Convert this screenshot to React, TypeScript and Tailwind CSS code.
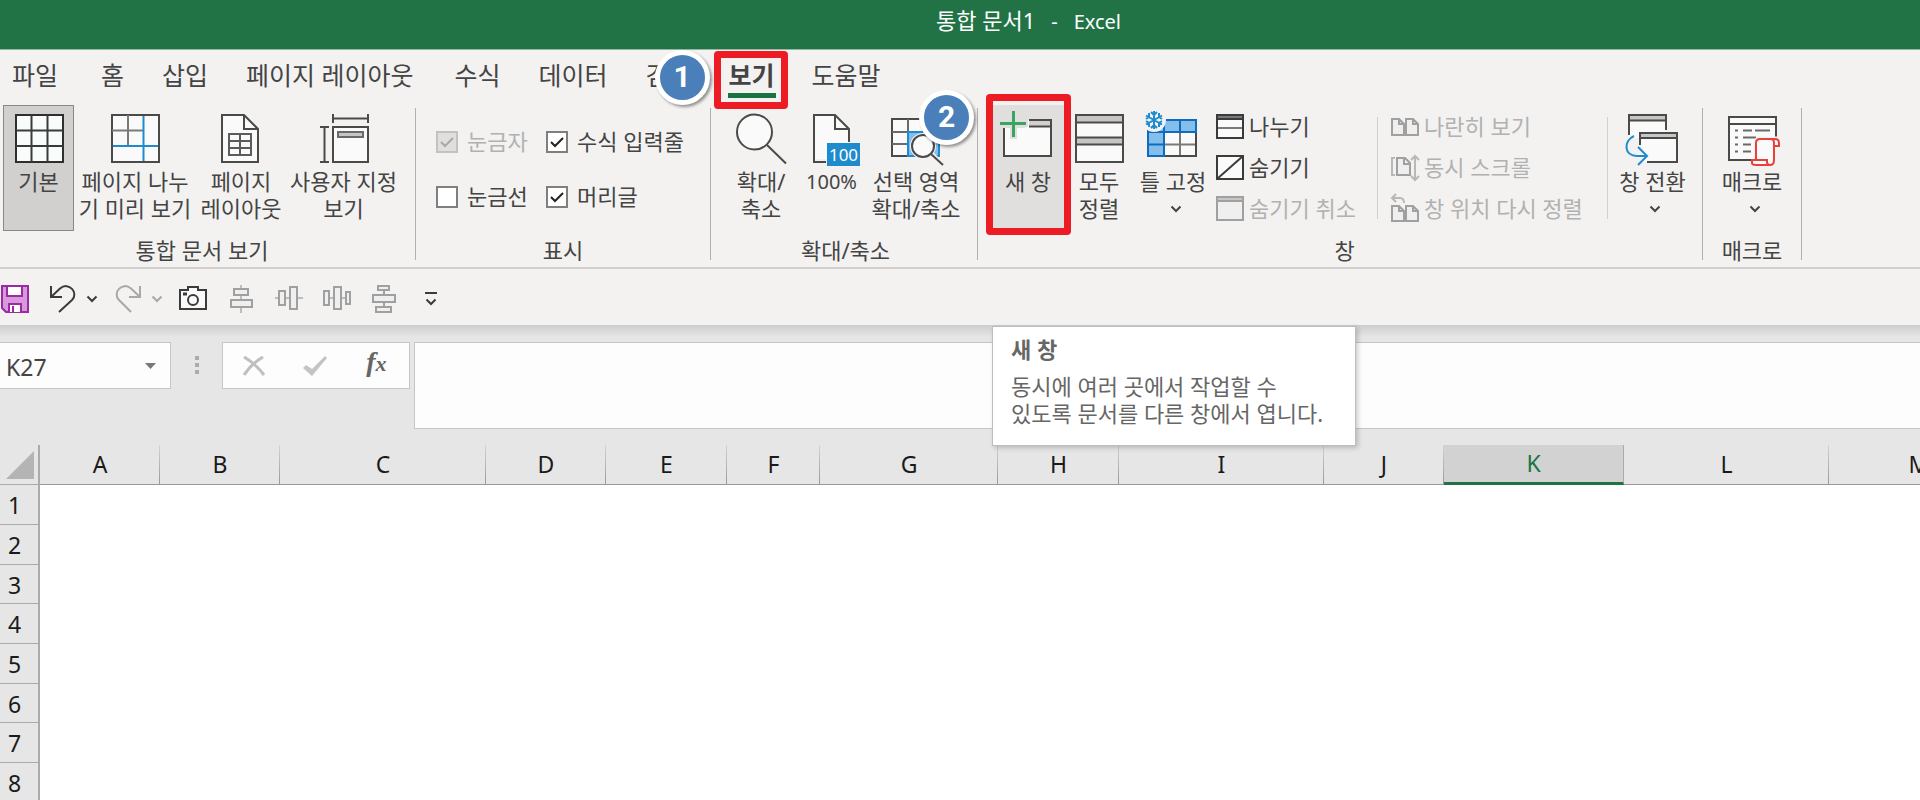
import React from 'react';
import clsx from 'clsx';

const TABS = [
  { name: '파일', className: 'mr-[5px]' },
  { name: '홈' },
  { name: '삽입' },
  { name: '페이지 레이아웃', className: 'pr-[3px]' },
  { name: '수식' },
  { name: '데이터' },
  { name: '검토', badge: '1' },
  { name: '보기', active: true, className: '-mx-[2px]' },
  { name: '도움말' },
];

const COLUMNS = [
  { name: 'A', width: 'w-[120px]' },
  { name: 'B', width: 'w-[120px]' },
  { name: 'C', width: 'w-[206px]' },
  { name: 'D', width: 'w-[120px]' },
  { name: 'E', width: 'w-[121px]' },
  { name: 'F', width: 'w-[93px]' },
  { name: 'G', width: 'w-[178px]' },
  { name: 'H', width: 'w-[121px]' },
  { name: 'I', width: 'w-[205px]' },
  { name: 'J', width: 'w-[120px]' },
  { name: 'K', width: 'w-[180px]', selected: true },
  { name: 'L', width: 'w-[205px]' },
  { name: 'M', width: 'w-[180px]' },
];

const ROWS = [1, 2, 3, 4, 5, 6, 7, 8];

/* ---------- large ribbon icons ---------- */

function BigIcon({ children }: { children: React.ReactNode }) {
  return (
    <svg width="56" height="59" viewBox="0 0 56 59" fill="none" stroke="#4a4a48" strokeWidth="2" className="overflow-visible shrink-0" aria-hidden="true">
      {children}
    </svg>
  );
}

function NormalViewIcon() {
  return (
    <BigIcon>
      <rect x="5" y="6" width="47" height="47" fill="#f8fcfb" stroke="#2f2f2f" />
      <path d="M20.5 6v47M36.5 6v47M5 21.5h47M5 37h47" stroke="#3b3b3b" />
    </BigIcon>
  );
}

function PageBreakIcon() {
  return (
    <BigIcon>
      <rect x="5" y="6" width="47" height="47" fill="#fafafa" />
      <path d="M21 6v31M5 21.5h31" stroke="#7a7a78" />
      <path d="M36.5 7v45M6 37h45" stroke="#1e8bcd" />
    </BigIcon>
  );
}

function PageLayoutIcon() {
  return (
    <BigIcon>
      <path d="M9 6h22l14 14v33H9z" fill="#fafafa" />
      <path d="M31 6v14h14" />
      <path d="M16 25h22v21H16zM27 25v21M16 32h22M16 39h22" stroke="#5c5c5a" />
    </BigIcon>
  );
}

function CustomViewIcon() {
  return (
    <BigIcon>
      <rect x="17" y="18" width="35" height="35" fill="#fafafa" />
      <rect x="22" y="23" width="25" height="5" fill="#c8c6c4" stroke="#6a6a68" />
      <path d="M17 9.5h35M17 5v9M52 5v9M8.5 18v35M4 18h9M4 53h9" />
    </BigIcon>
  );
}

function ZoomIcon() {
  return (
    <BigIcon>
      <circle cx="21.5" cy="23" r="17.5" fill="#fafafa" />
      <path d="M34 36l19 18.5" />
    </BigIcon>
  );
}

function Zoom100Icon() {
  return (
    <BigIcon>
      <path d="M10 6h21l14 14v30H10z" fill="#fafafa" stroke="none" />
      <path d="M22 53H10V6h21l14 14v13M31 6v14h14" />
      <rect x="23" y="34" width="33" height="23" fill="#1e8bcd" stroke="none" />
      <text x="39.5" y="52" textAnchor="middle" fontSize="17" fill="#fff" stroke="none">100</text>
    </BigIcon>
  );
}

function ZoomSelectionIcon() {
  return (
    <BigIcon>
      <path d="M4 10h47v37H4z" fill="#fafafa" />
      <path d="M20 10v37M35.5 10v37M4 23h47M4 35h47" stroke="#6a6a68" />
      <path d="M20 23h31v24H20z" fill="#83beec" stroke="#1e8bcd" />
      <circle cx="35" cy="37" r="13" fill="#f3f2f1" stroke="none" />
      <path d="M42 44l14 14" stroke="#f3f2f1" strokeWidth="6" />
      <circle cx="35" cy="37" r="11" fill="#fafafa" />
      <path d="M43 45l12 11" />
    </BigIcon>
  );
}

function NewWindowIcon() {
  return (
    <BigIcon>
      <path d="M4 19h21v-8h26v36H4z" fill="#fafafa" stroke="none" />
      <path d="M29 11h22v6H29z" fill="#d2d0ce" stroke="none" />
      <path d="M4 19v28h47V11H29M29 17.5h22" />
      <path d="M13.5 2v28M0 14.5h28" stroke="#e1dfdd" strokeWidth="7" />
      <path d="M13.5 2v26M0 14.5h26" stroke="#37a660" strokeWidth="3" />
    </BigIcon>
  );
}

function ArrangeAllIcon() {
  return (
    <BigIcon>
      <rect x="5" y="6" width="47" height="47" fill="#fafafa" />
      <path d="M6 7h45v6H6zM6 29h45v6H6z" fill="#c8c6c4" stroke="none" />
      <path d="M5 13.5h47M5 28.5h47M5 35.5h47" />
    </BigIcon>
  );
}

function FreezeIcon() {
  return (
    <BigIcon>
      <path d="M3 11h48v36H3z" fill="#fafafa" />
      <path d="M19 35.5h32M35 23v24" stroke="#7a7a78" />
      <path d="M51 23v24H19" />
      <path d="M3 11h48v12H19v24H3z" fill="#83beec" stroke="#0f6cbd" />
      <path d="M19 11v12M35 11v12M3 23h16M3 35.5h16" stroke="#0f6cbd" />
      <circle cx="9" cy="11" r="12" fill="#f3f2f1" stroke="none" />
      <path
        d="M9 2v18M1 6.5l16 9M1 15.5l16-9M6 3l3 3 3-3M6 19l3-3 3 3M1 10l3-2V4M17 10l-3-2V4M1 12l3 2v4M17 12l-3 2v4"
        stroke="#1e8bcd"
      />
    </BigIcon>
  );
}

function SwitchWindowIcon() {
  return (
    <BigIcon>
      <path d="M4 6h37v17H15v6H4z" fill="#fafafa" stroke="none" />
      <path d="M4 6h37v5H4z" fill="#c8c6c4" stroke="none" />
      <path d="M4 26V6h37v15M4 11.5h37" />
      <path d="M15 24h37v29H18V38h-3z" fill="#fafafa" stroke="none" />
      <path d="M15 24h37v5H15z" fill="#c8c6c4" stroke="none" />
      <path d="M15 36V24h37v29H22M15 29h37" />
      <path d="M9 27C-2 32-1 47 12 47h10M13 38l9 9-9 9" stroke="#1e8bcd" />
    </BigIcon>
  );
}

function MacroIcon() {
  return (
    <BigIcon>
      <path d="M5 8h47v43H5z" fill="#fafafa" stroke="none" />
      <path d="M52 28V8H5v43h22M5 15h47" />
      <path d="M11 21.5h3M19 21.5h9M31 21.5h15M11 28.5h3M19 28.5h13M11 35.5h3M19 35.5h8M11 42.5h3M19 42.5h8" stroke="#6a6a68" />
      <path d="M32 51V35q0-5 5-5h14v16l-3 10H30z" fill="#fafafa" stroke="#f3f2f1" strokeWidth="5" />
      <path d="M32 51V34q0-4 4-4h15q4 0 4 4v3h-5V34q0-4-3-4M50 37v14q0 5-4 5H32q-4 0-4-2v-3h15v2q0 3 3 3" fill="#fafafa" stroke="#e8413c" />
    </BigIcon>
  );
}

/* ---------- small ribbon icons ---------- */

function SmallIcon({ children, disabled }: { children: React.ReactNode; disabled?: boolean }) {
  return (
    <svg width="28" height="28" viewBox="0 0 28 28" fill="none" stroke={disabled ? '#a0a0a0' : '#3b3b3b'} strokeWidth="2" className="overflow-visible shrink-0" aria-hidden="true">
      {children}
    </svg>
  );
}

function SplitIcon() {
  return (
    <SmallIcon>
      <path d="M1 2h26v23H1z" fill="#fafafa" />
      <path d="M1 4h26" stroke="#7a7a78" strokeWidth="3" />
      <path d="M1 2h26v23H1zM1 6h26" />
      <path d="M2 15h24" stroke="#7a7a78" />
    </SmallIcon>
  );
}

function HideIcon() {
  return (
    <SmallIcon>
      <path d="M1 2h26v23H1z" fill="#fafafa" />
      <path d="M1 25L27 2" />
    </SmallIcon>
  );
}

function UnhideIcon() {
  return (
    <SmallIcon disabled>
      <path d="M1 2h26v23H1z" fill="#efefef" />
      <path d="M1 2h26v4H1z" fill="#c8c6c4" />
    </SmallIcon>
  );
}

function SideBySideIcon() {
  return (
    <SmallIcon disabled>
      <path d="M1 6h7l5 5v11H1zM8 6v5h5M15 6h7l5 5v11H15zM22 6v5h5" fill="#efefef" />
    </SmallIcon>
  );
}

function SyncScrollIcon() {
  return (
    <SmallIcon disabled>
      <path d="M6 4h8l5 5v12H6zM13 4v6h6" fill="#efefef" />
      <path d="M4 4H1v17h3M24 2v24M20 6l4-4 4 4M20 22l4 4 4-4" stroke="#b8b8b8" />
    </SmallIcon>
  );
}

function ResetWindowIcon() {
  return (
    <SmallIcon disabled>
      <path d="M1 11h7l5 5v10H1zM8 11v5h5M15 11h7l5 5v10H15zM22 11v5h5" fill="#efefef" />
      <path d="M5-1L1 3l4 4M1 3h8q4 0 4 5" stroke="#b8b8b8" />
    </SmallIcon>
  );
}

function Chevron({ className }: { className?: string }) {
  return (
    <svg width="12" height="8" viewBox="0 0 12 8" fill="none" stroke="currentColor" strokeWidth="2" className={className} aria-hidden="true">
      <path d="M1.5 1.5L6 6l4.5-4.5" />
    </svg>
  );
}

/* ---------- ribbon parts ---------- */

function Badge({ value, className }: { value: string; className: string }) {
  return (
    <span
      className={clsx(
        "absolute z-10 flex size-[55px] items-center justify-center rounded-full border-5 border-white bg-[#4a7fba] pb-px font-['Roboto',sans-serif] text-[30px] leading-none font-bold text-white shadow-[2px_2px_3px_rgba(0,0,0,0.4)]",
        className
      )}
    >
      {value}
    </span>
  );
}

function Divider() {
  return <div className="mt-[3px] h-[152px] w-px shrink-0 bg-[#b3b1af]" />;
}

function Group({ label, className, children }: { label: string; className?: string; children: React.ReactNode }) {
  return (
    <section aria-label={label} className={clsx('flex shrink-0 flex-col', className)}>
      <div className="flex h-[126px]">{children}</div>
      <div className="mt-[6px] text-center leading-[27px]">{label}</div>
    </section>
  );
}

interface BigButtonProps {
  icon: React.ReactNode;
  lines: string[];
  className: string;
  menu?: boolean;
  children?: React.ReactNode;
}

function BigButton({ icon, lines, className, menu, children }: BigButtonProps) {
  return (
    <button type="button" className={clsx('relative flex shrink-0 flex-col items-center whitespace-nowrap', className)}>
      {icon}
      {lines.map((line) => (
        <span key={line} className={clsx('leading-[27px]', line === '100%' && 'text-[20px]')}>{line}</span>
      ))}
      {menu && <Chevron className="mt-[10px] ml-[5px]" />}
      {children}
    </button>
  );
}

function SmallButton({ icon, label, disabled }: { icon: React.ReactNode; label: string; disabled?: boolean }) {
  return (
    <button type="button" disabled={disabled} className="flex h-[41px] items-center gap-[5px] whitespace-nowrap disabled:text-[#b1b1b1]">
      {icon}
      {label}
    </button>
  );
}

function CheckOption({ label, checked, disabled }: { label: string; checked?: boolean; disabled?: boolean }) {
  return (
    <label className={clsx('flex h-[55px] items-center gap-[9px] whitespace-nowrap', disabled && 'text-[#b1b1b1]')}>
      <span className="grid">
        <input
          type="checkbox"
          defaultChecked={checked}
          disabled={disabled}
          className="peer col-start-1 row-start-1 size-[22px] appearance-none border-2 border-[#7f7f7f] bg-white disabled:border-[#c4c2c0] disabled:bg-[#e1dfdd]"
        />
        <svg viewBox="0 0 22 22" fill="none" stroke={disabled ? '#a8a8a8' : '#222'} strokeWidth="2" className="pointer-events-none invisible col-start-1 row-start-1 size-[22px] peer-checked:visible" aria-hidden="true">
          <path d="M5 11l4 4 8-8" />
        </svg>
      </span>
      {label}
    </label>
  );
}

function RibbonTabs() {
  return (
    <nav className="flex h-[55px] items-start gap-[38px] pt-[9px] pl-3 text-[25px]">
      {TABS.map((tab) => (
        <button
          key={tab.name}
          type="button"
          className={clsx('relative flex shrink-0 flex-col items-center whitespace-nowrap leading-8', tab.active && 'font-bold', tab.className)}
        >
          {tab.name}
          {tab.badge && <Badge value={tab.badge} className="-top-[9px] left-[9px]" />}
          {tab.active && (
            <>
              <span className="mt-[2px] h-[5px] w-12 bg-[#1b7241]" />
              <span className="absolute -top-2 -left-[14px] z-10 h-[58px] w-[74px] rounded-[4px] border-7 border-[#ed1c24]" />
            </>
          )}
        </button>
      ))}
    </nav>
  );
}

function Tooltip() {
  return (
    <div role="tooltip" className="absolute top-[221px] left-0 z-20 w-[364px] border border-[#bebebe] bg-white pt-[9px] pr-4 pb-[18px] pl-[18px] leading-[27px] whitespace-nowrap text-[#666] shadow-[2px_2px_5px_rgba(0,0,0,0.2)]">
      <strong className="block font-bold">새 창</strong>
      <p className="mt-[10px]">
        동시에 여러 곳에서 작업할 수
        <br />
        있도록 문서를 다른 창에서 엽니다.
      </p>
    </div>
  );
}

function Ribbon() {
  return (
    <div className="flex h-[162px] items-start">
      <Group label="통합 문서 보기" className="pr-[14px] pl-[3px]">
        <BigButton icon={<NormalViewIcon />} lines={['기본']} className="w-[71px] border border-[#8a8886] bg-[#d2d0ce] pt-[3px]" />
        <BigButton icon={<PageBreakIcon />} lines={['페이지 나누', '기 미리 보기']} className="w-[122px] pt-1" />
        <BigButton icon={<PageLayoutIcon />} lines={['페이지', '레이아웃']} className="w-[90px] pt-1" />
        <BigButton icon={<CustomViewIcon />} lines={['사용자 지정', '보기']} className="w-[115px] pt-1" />
      </Group>
      <Divider />
      <Group label="표시" className="w-[294px]">
        <div className="grid grid-cols-[110px_auto] content-start pt-[9px] pl-5">
          <CheckOption label="눈금자" checked disabled />
          <CheckOption label="수식 입력줄" checked />
          <CheckOption label="눈금선" />
          <CheckOption label="머리글" checked />
        </div>
      </Group>
      <Divider />
      <Group label="확대/축소" className="pr-[13px] pl-4">
        <BigButton icon={<ZoomIcon />} lines={['확대/', '축소']} className="w-[68px] pt-1" />
        <BigButton icon={<Zoom100Icon />} lines={['100%']} className="w-[73px] pt-1" />
        <BigButton icon={<ZoomSelectionIcon />} lines={['선택 영역', '확대/축소']} className="w-[96px] pt-1">
          <Badge value="2" className="-top-[15px] left-[51px]" />
        </BigButton>
      </Group>
      <Divider />
      <Group label="창" className="pr-[5px] pl-[14px]">
        <div className="relative flex">
          <BigButton icon={<NewWindowIcon />} lines={['새 창']} className="w-[72px] bg-[#e1dfdd] pt-1">
            <span className="absolute -top-[11px] -left-[6px] h-[141px] w-[85px] rounded-[4px] border-7 border-[#ed1c24]" />
          </BigButton>
          <Tooltip />
        </div>
        <BigButton icon={<ArrangeAllIcon />} lines={['모두', '정렬']} className="w-[70px] pt-1" />
        <BigButton icon={<FreezeIcon />} lines={['틀 고정']} menu className="w-[78px] pt-1" />
        <div className="w-[165px] pt-px pl-1">
          <SmallButton icon={<SplitIcon />} label="나누기" />
          <SmallButton icon={<HideIcon />} label="숨기기" />
          <SmallButton icon={<UnhideIcon />} label="숨기기 취소" disabled />
        </div>
        <div className="my-3 w-px bg-[#d2d0ce]" />
        <div className="w-[229px] pt-px pl-[13px]">
          <SmallButton icon={<SideBySideIcon />} label="나란히 보기" disabled />
          <SmallButton icon={<SyncScrollIcon />} label="동시 스크롤" disabled />
          <SmallButton icon={<ResetWindowIcon />} label="창 위치 다시 정렬" disabled />
        </div>
        <div className="my-3 w-px bg-[#d2d0ce]" />
        <BigButton icon={<SwitchWindowIcon />} lines={['창 전환']} menu className="w-[89px] pt-1" />
      </Group>
      <Divider />
      <Group label="매크로" className="px-[9px]">
        <BigButton icon={<MacroIcon />} lines={['매크로']} menu className="w-20 pt-1" />
      </Group>
      <Divider />
    </div>
  );
}

/* ---------- quick access toolbar ---------- */

function ToolButton({ label, className, children }: { label: string; className?: string; children: React.ReactNode }) {
  return (
    <button type="button" aria-label={label} className={clsx('shrink-0', className)}>
      <svg width="28" height="28" viewBox="0 0 28 28" fill="none" stroke="currentColor" strokeWidth="2" className="block overflow-visible">
        {children}
      </svg>
    </button>
  );
}

function QuickAccess() {
  return (
    <div className="flex h-[58px] items-center border-t-2 border-[#d2d0ce] bg-[#f3f2f1] pt-[3px] pl-px text-[#3b3b3b]">
      <ToolButton label="저장" className="text-[#9a2ba3]">
        <path d="M1 1h26v26H5l-4-4z" fill="#d997dd" />
        <path d="M6 1h15v10H6zM8 27v-8h12v8" fill="#fff" />
        <path d="M12 21v6" />
      </ToolButton>
      <ToolButton label="실행 취소" className="ml-5">
        <path d="M2 1v11h11M2 12L11 3.5C20-4 30 8 23 15L10 27" />
      </ToolButton>
      <button type="button" aria-label="실행 취소 목록" className="ml-[9px]"><Chevron /></button>
      <ToolButton label="다시 실행" className="ml-4 text-[#a8a8a8]">
        <path d="M26 1v11H15M26 12L17 3.5C8-4-2 8 5 15L17 27" />
      </ToolButton>
      <button type="button" aria-label="다시 실행 목록" className="ml-[9px] text-[#a8a8a8]"><Chevron /></button>
      <ToolButton label="카메라" className="ml-4">
        <path d="M1 5h8V2h10v3h8v19H1z" fill="#fafafa" />
        <circle cx="14" cy="15" r="5" />
        <path d="M4 9h4" strokeWidth="3" />
      </ToolButton>
      <ToolButton label="가운데 맞춤" className="ml-5 text-[#a0a0a0]">
        <path d="M14 0v28" stroke="#bdbdbd" />
        <path d="M7 4h14v6H7zM4 15h21v7H4z" fill="#efefef" />
      </ToolButton>
      <ToolButton label="중간 맞춤" className="ml-5 text-[#a0a0a0]">
        <path d="M0 13h28" stroke="#bdbdbd" />
        <path d="M4 6h6v14H4zM15 2h7v22h-7z" fill="#efefef" />
      </ToolButton>
      <ToolButton label="가로 간격을 동일하게" className="ml-5 text-[#a0a0a0]">
        <path d="M6 13h5M18 13h5" stroke="#bdbdbd" />
        <path d="M1 6h5v14H1zM11 2h7v22h-7zM23 7h4v12h-4z" fill="#efefef" />
      </ToolButton>
      <ToolButton label="세로 간격을 동일하게" className="ml-[19px] text-[#a0a0a0]">
        <path d="M8 1h11v4H8zM3 10h22v7H3zM6 22h15v5H6z" fill="#efefef" />
        <path d="M14 5v5M14 17v5" />
      </ToolButton>
      <button type="button" aria-label="빠른 실행 도구 모음 사용자 지정" className="ml-[27px] flex flex-col items-center gap-1">
        <span className="h-[2px] w-3 bg-[#3b3b3b]" />
        <Chevron />
      </button>
    </div>
  );
}

/* ---------- formula bar and sheet ---------- */

function FormulaBar() {
  return (
    <div className="flex items-start bg-[#e6e6e6] bg-[linear-gradient(#cdcdcd,#e6e6e6)] bg-[length:100%_12px] bg-no-repeat pt-[17px] pb-4">
      <div className="flex h-[47px] w-[171px] shrink-0 items-center border border-l-0 border-[#c6c6c6] bg-[#fdfdfd]">
        <input aria-label="이름 상자" defaultValue="K27" className="w-[140px] pt-1 pl-[6px] text-[23px] text-[#444] outline-none" />
        <button type="button" aria-label="이름 목록" className="ml-[5px]">
          <svg width="11" height="6" viewBox="0 0 11 6" className="block" fill="#777"><path d="M0 0h11L5.5 6z" /></svg>
        </button>
      </div>
      <div className="flex h-[64px] w-[51px] shrink-0 flex-col items-center gap-[3px] pt-[14px]">
        <span className="size-1 bg-[#ababab]" />
        <span className="size-1 bg-[#ababab]" />
        <span className="size-1 bg-[#ababab]" />
      </div>
      <div className="flex h-[47px] w-[188px] shrink-0 border border-[#c6c6c6] bg-[#fdfdfd] pr-[2px]">
        <button type="button" aria-label="취소" className="flex flex-1 items-center justify-center">
          <svg width="22" height="20" viewBox="0 0 22 20" fill="none" stroke="#bfbfbf" strokeWidth="3"><path d="M1 1q12 7 20 18M20 1Q8 8 1 19" /></svg>
        </button>
        <button type="button" aria-label="입력" className="flex flex-1 items-center justify-center">
          <svg width="24" height="20" viewBox="0 0 24 20" fill="#c4c4c4"><path d="M0 12l3-3 6 4L22 0l2 2L9 20z" /></svg>
        </button>
        <button type="button" aria-label="함수 삽입" className="flex-1 pb-2 font-['Liberation_Serif',serif] text-[28px] leading-none font-bold text-[#666] italic">
          f<span className="text-[22px]">x</span>
        </button>
      </div>
      <textarea aria-label="수식 입력줄" className="ml-1 block h-[87px] min-w-0 flex-1 resize-none border border-r-0 border-[#c6c6c6] bg-[#fdfdfd] outline-none" />
    </div>
  );
}

function Sheet() {
  return (
    <div className="min-h-0 flex-1 overflow-hidden bg-white">
      <table className="w-max table-fixed border-separate border-spacing-0 text-[23px] leading-[30px] text-[#1a1a1a]">
        <thead>
          <tr>
            <th className="h-10 w-10 border-r-2 border-b border-[#ababab] bg-[#e6e6e6] p-0">
              <svg width="28" height="28" viewBox="0 0 28 28" className="ml-[6px] block" fill="#b4b4b4"><path d="M28 0v28H0z" /></svg>
            </th>
            {COLUMNS.map((col) => (
              <th
                key={col.name}
                scope="col"
                className={clsx(
                  'h-10 p-0 pb-[2px] font-normal',
                  col.width,
                  col.selected
                    ? 'border-r border-b-3 border-r-[#ababab] border-b-[#217346] bg-[#d2d2d2] text-[#217346]'
                    : 'border-b border-[#999] bg-[#e6e6e6] bg-[linear-gradient(#d4d4d4,#999)] bg-[length:1px_100%] bg-right bg-no-repeat'
                )}
              >
                {col.name}
              </th>
            ))}
          </tr>
        </thead>
        <tbody>
          {ROWS.map((row) => (
            <tr key={row}>
              <th
                scope="row"
                className={clsx(
                  'border-r-2 border-b border-[#ababab] bg-[#e6e6e6] p-0 pt-px pr-[9px] font-normal',
                  row % 3 === 0 ? 'h-[39px]' : 'h-10'
                )}
              >
                {row}
              </th>
              {COLUMNS.map((col) => (
                <td key={col.name} className="p-0" />
              ))}
            </tr>
          ))}
        </tbody>
      </table>
    </div>
  );
}

export default function App() {
  return (
    <div className="flex h-screen flex-col overflow-hidden bg-[#f3f2f1] font-['Noto_Sans','Noto_Sans_CJK_KR',sans-serif] text-[22px] text-[#444]">
      <header className="h-[50px] shrink-0 border-b border-[#8fb9a2] bg-[#217346] pt-[5px] pl-[137px] text-center leading-[30px] text-white">
        통합 문서1<span className="px-4 text-[20px]">-</span>
        <span className="text-[20px]">Excel</span>
      </header>
      <RibbonTabs />
      <Ribbon />
      <QuickAccess />
      <FormulaBar />
      <Sheet />
    </div>
  );
}
